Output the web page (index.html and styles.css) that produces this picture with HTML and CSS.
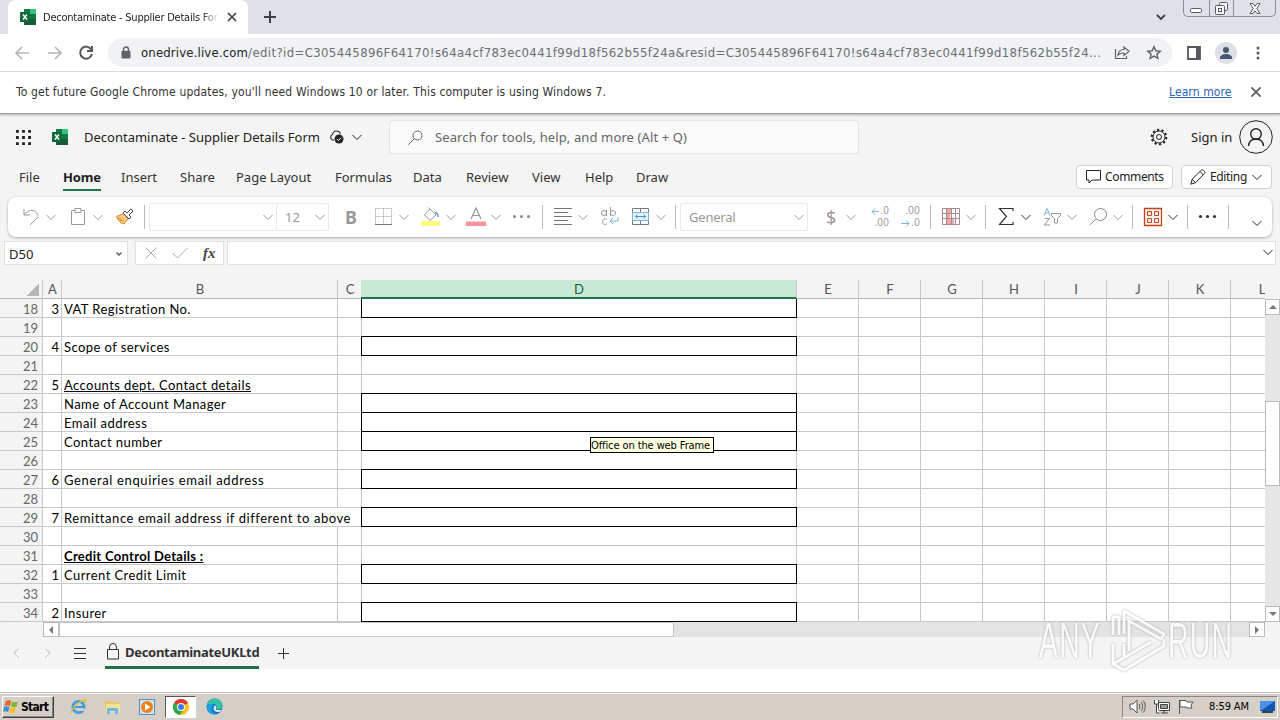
FILE: index.html
```html
<!DOCTYPE html>
<html lang="en">
<head>
  <meta charset="UTF-8">
  <title>Decontaminate - Supplier Details Form</title>
  <link rel="stylesheet" href="styles.css">
</head>
<body>
  <!-- Shared shapes -->
  <svg class="defs" width="0" height="0">
    <symbol id="chev" viewBox="0 0 10 10"><path d="M.5 3 5 7.5 9.5 3" fill="none" stroke="currentColor"/></symbol>
    <symbol id="excel" viewBox="0 0 16 16">
      <path d="M4 0h12v16H4z" fill="#21a366"/><path d="M4 0h6v5H4z" fill="#107c41"/><path d="M10 0h6v5h-6z" fill="#33c481"/>
      <path d="M4 10h12v6H4z" fill="#185c37"/><path d="M10 5h6v5h-6z" fill="#107c41"/>
      <path d="M0 3h10v10H0z" fill="#0e6b38"/><path d="m3 5.500 4 5M7 5.500l-4 5" stroke="#fff" stroke-width="1.500"/>
    </symbol>
  </svg>

  <!-- Browser -->
  <div class="tabstrip">
    <div class="tab">
      <svg width="16" height="16"><use href="#excel"/></svg>
      <span class="tab-title">Decontaminate - Supplier Details For</span>
      <svg width="10" height="10" viewBox="0 0 10 10"><path d="m1 1 8 8M9 1 1 9" stroke="#3c4043" stroke-width="1.700"/></svg>
    </div>
    <svg class="new-tab" width="12" height="12" viewBox="0 0 12 12"><path d="M6 0v12M0 6h12" stroke="#3c4043" stroke-width="2"/></svg>
    <svg class="tab-search" width="10" height="10" viewBox="0 0 10 10"><path d="m1 3 4 4 4-4" fill="none" stroke="#3c4043" stroke-width="1.800"/></svg>
    <div class="win-buttons">
      <span><svg width="12" height="5" viewBox="0 0 12 5"><rect x=".5" y=".5" width="11" height="4" rx="1" fill="#fff" stroke="#555b66"/></svg></span>
      <span><svg width="13" height="13" viewBox="0 0 13 13" fill="#f4f5f7" stroke="#555b66"><rect x="4.500" y=".5" width="8" height="8" rx="1"/><rect x=".5" y="3.500" width="9" height="9" rx="1"/><rect x="3.500" y="6.500" width="3" height="3"/></svg></span>
      <span><svg width="12" height="11" viewBox="0 0 12 11"><path d="M1 .5h3l2 2.800L8 .5h3L7.800 5.500 11 10.500H8L6 7.700l-2 2.800H1l3.200-5z" fill="#fff" stroke="#555b66"/></svg></span>
    </div>
  </div>

  <div class="toolbar">
    <svg width="16" height="14" viewBox="0 0 16 14" fill="none" stroke="#b4b6b9" stroke-width="1.700"><path d="M15 7H2M8 1 2 7l6 6"/></svg>
    <svg width="16" height="14" viewBox="0 0 16 14" fill="none" stroke="#b4b6b9" stroke-width="1.700"><path d="M1 7h13M8 1l6 6-6 6"/></svg>
    <svg width="16" height="16" viewBox="0 0 16 16" fill="none" stroke="#55585c" stroke-width="2"><path d="M13.300 4.500A6 6 0 1 0 14 9"/><path d="M14 1v5H9" /></svg>
    <div class="omnibox">
      <svg class="lock" width="10" height="13" viewBox="0 0 10 13"><path d="M2.500 5V3.500a2.500 2.500 0 0 1 5 0V5" fill="none" stroke="#5f6368" stroke-width="1.400"/><rect x=".5" y="4.800" width="9" height="7.700" rx="1" fill="#5f6368"/></svg>
      <span class="url"><b>onedrive.live.com</b>/edit?id=C305445896F64170!s64a4cf783ec0441f99d18f562b55f24a&amp;resid=C305445896F64170!s64a4cf783ec0441f99d18f562b55f24...</span>
      <svg width="16" height="15" viewBox="0 0 16 15" fill="none" stroke="#5f6368" stroke-width="1.200"><path d="M1.500 4v9.500h11V11"/><path d="M4 10c.5-4 3-5.500 6-5.500V2l5 4.300-5 4.200V8C7.500 8 5.500 8.500 4 10z"/></svg>
      <svg width="16" height="16" viewBox="0 0 16 16" fill="none" stroke="#5f6368" stroke-width="1.400"><path d="m8 1.800 1.800 4 4.400.4-3.300 2.900 1 4.300L8 11.100l-3.900 2.300 1-4.300-3.300-2.900 4.400-.4z"/></svg>
    </div>
    <svg class="side-panel" width="14" height="14" viewBox="0 0 14 14"><path d="M1 1h12v12H1z" fill="none" stroke="#55585c" stroke-width="1.800"/><path d="M9 1h4v12H9z" fill="#55585c"/></svg>
    <svg class="avatar" width="22" height="22" viewBox="0 0 22 22"><circle cx="11" cy="11" r="11" fill="#dde1e7"/><circle cx="11" cy="8" r="3" fill="#495670"/><path d="M5 17v-1.500c0-2 3.500-3.500 6-3.500s6 1.500 6 3.500V17z" fill="#495670"/></svg>
    <svg class="kebab" width="4" height="14" viewBox="0 0 4 14" fill="#55585c"><circle cx="2" cy="2" r="1.500"/><circle cx="2" cy="7" r="1.500"/><circle cx="2" cy="12" r="1.500"/></svg>
  </div>

  <div class="infobar">
    <span class="notice">To get future Google Chrome updates, you'll need Windows 10 or later. This computer is using Windows 7.</span>
    <a class="learn">Learn more</a>
    <svg width="10" height="10" viewBox="0 0 10 10"><path d="m.5.500 9 9M9.500.500l-9 9" stroke="#55585c" stroke-width="1.700"/></svg>
  </div>

  <!-- Excel -->
  <div class="excel">
    <div class="header">
      <svg class="waffle" width="15" height="15" viewBox="0 0 16 16" fill="#222"><path d="M0 0h3v3H0zM6.500 0h3v3h-3zM13 0h3v3h-3zM0 6.500h3v3H0zM6.500 6.500h3v3h-3zM13 6.500h3v3h-3zM0 13h3v3H0zM6.500 13h3v3h-3zM13 13h3v3h-3z"/></svg>
      <svg class="logo" width="16" height="16"><use href="#excel"/></svg>
      <span class="doc-title">Decontaminate - Supplier Details Form</span>
      <svg class="cloud" width="15" height="14" viewBox="0 0 15 14"><path d="M5 10H3.500a3 3 0 0 1 0-5.500C4 2.500 5.500 1 7.500 1S11 2.500 11.300 4" fill="none" stroke="#333" stroke-width="1.200"/><circle cx="10" cy="9" r="4.500" fill="#222"/><path d="m7.800 9 1.600 1.600 2.800-3" fill="none" stroke="#fff"/></svg>
      <svg class="title-chev" width="10" height="10"><use href="#chev"/></svg>
      <div class="search">
        <svg width="15" height="15" viewBox="0 0 15 15" fill="none" stroke="#666"><circle cx="9.500" cy="5.500" r="4.500"/><path d="m6.300 8.700-6 6"/></svg>
        <span>Search for tools, help, and more (Alt + Q)</span>
      </div>
      <svg class="gear" width="18" height="18" viewBox="0 0 18 18" fill="none" stroke="#222"><circle cx="9" cy="9" r="2.500"/><circle cx="9" cy="9" r="6"/><circle cx="9" cy="9" r="7.300" stroke-width="2" stroke-dasharray="2.300 2.287"/></svg>
      <span class="signin">Sign in</span>
      <svg class="person" width="34" height="34" viewBox="0 0 34 34" fill="none" stroke="#222"><circle cx="17" cy="17" r="16.300"/><g stroke-width="1.400"><circle cx="17" cy="14" r="5.300"/><path d="M9.500 26c.5-4.500 3.500-7 7.500-7s7 2.500 7.500 7"/></g></svg>
    </div>

    <div class="menu">
      <span>File</span><span class="active">Home</span><span>Insert</span><span>Share</span><span>Page Layout</span><span>Formulas</span><span>Data</span><span>Review</span><span>View</span><span>Help</span><span>Draw</span>
      <div class="menu-right">
        <div class="btn comments"><svg width="15" height="14" viewBox="0 0 15 14" fill="none" stroke="#222"><path d="M.5.500h14v9.500H6l-3 3V10H.5z"/></svg><span>Comments</span></div>
        <div class="btn editing"><svg width="16" height="16" viewBox="0 0 16 16" fill="none" stroke="#222"><path d="m.8 15.200 1.400-5L11.500 1c1-1 4.400 2 3.300 3.300L5.500 13.700zM10 2.500 13.400 6M2.200 10.500l3.200 3"/></svg><span>Editing</span><svg width="10" height="10"><use href="#chev"/></svg></div>
      </div>
    </div>

    <div class="ribbon">
      <div class="tool off"><svg viewBox="0 0 20 20"><path d="M3 2v6h6M3 8c4-5 9-6 12-3s2 6-1 8l-5 5"/></svg><svg class="c"><use href="#chev"/></svg></div>
      <div class="tool off"><svg viewBox="0 0 20 20"><path d="M7 3.500H3.500v14h13v-14H13M7 1.500h6v4H7z"/></svg><svg class="c"><use href="#chev"/></svg></div>
      <div class="tool"><svg viewBox="0 0 20 20"><path d="m1.500 9.500 7-3 4.500 5.500-4 5C5 16 2.500 13 1.500 9.500z" fill="#fbc98a" stroke="#e08a22"/><path d="m3 11 3 1M5 13.500l4-.5" stroke="#e08a22"/><path d="m8 6 2-2 2 2 4-4 2 2-4 4 2 2-2 2z" fill="#fff" stroke="#444"/></svg></div>
      <i class="sep"></i>
      <div class="field font"><svg class="c"><use href="#chev"/></svg></div>
      <div class="field size"><span>12</span><svg class="c"><use href="#chev"/></svg></div>
      <div class="bold">B</div>
      <div class="tool off"><svg viewBox="0 0 20 20"><path d="M1.500 1.500v15M9.500 1.500v15M17.500 1.500v15M1.500 1.500h16M1.500 9.500h16" stroke-dasharray="1 1"/><path d="M1 17.500h17" stroke="#777"/></svg><svg class="c"><use href="#chev"/></svg></div>
      <div class="tool off"><svg viewBox="0 0 20 20"><path d="M0 14h19v5H0z" fill="#fbfb82" stroke="none"/><path d="m9 2 6 6-6 5.500L3.500 8zM9 2 7.500.5"/><path d="M14 6c2-1 3 1 3 4" stroke="#6b9cc8" stroke-width="1.500"/></svg><svg class="c"><use href="#chev"/></svg></div>
      <div class="tool off"><svg viewBox="0 0 20 20"><path d="M0 14.500h20v4.500H0z" fill="#f9929b" stroke="none"/><path d="m5 12 5-11 5 11M6.700 8.500h6.600" stroke-width="1.200"/></svg><svg class="c"><use href="#chev"/></svg></div>
      <div class="tool"><svg viewBox="0 0 20 20"><g fill="#888" stroke="none"><circle cx="3.500" cy="9.500" r="1.500"/><circle cx="10.500" cy="9.500" r="1.500"/><circle cx="17.500" cy="9.500" r="1.500"/></g></svg></div>
      <i class="sep"></i>
      <div class="tool off"><svg viewBox="0 0 20 20" stroke="#777"><path d="M1 1.500h18M1 5.500h14M1 9.500h18M1 13.500h14M1 17.500h18"/></svg><svg class="c"><use href="#chev"/></svg></div>
      <div class="tool off"><svg viewBox="0 0 20 20"><circle cx="4" cy="6" r="2.500"/><path d="M6.500 3v6M10.500 0v9M7 12.500c-2-1.500-4.500-.5-4.500 2.200s2.500 3.700 4.500 2"/><circle cx="13" cy="6" r="2.500"/><path d="M18 10v4h-8m3-3-3 3 3 3" stroke="#79b6e3"/></svg></div>
      <div class="tool off"><svg viewBox="0 0 20 20"><path d="M1.500 1.500h16v16h-16z" stroke="#777"/><path d="M1.500 5.500h16M1.500 13.500h16M9.500 1.500v4M9.500 13.500v4" stroke="#777"/><path d="M1.500 5.500h16v8h-16z" fill="#e7f2fb" stroke="#79b6e3"/><path d="M4.500 9.500h10m-8-2-2 2 2 2m6-4 2 2-2 2" stroke="#4d92c8"/></svg><svg class="c"><use href="#chev"/></svg></div>
      <i class="sep"></i>
      <div class="field format"><span>General</span><svg class="c"><use href="#chev"/></svg></div>
      <div class="tool off money"><span>$</span><svg class="c"><use href="#chev"/></svg></div>
      <div class="decimal">
        <div><svg width="8" height="7" viewBox="0 0 8 7"><path d="M8 3.500H1M4 .5l-3 3 3 3"/></svg><span>.0</span></div>
        <span>.00</span>
      </div>
      <div class="decimal">
        <span>.00</span>
        <div><svg width="9" height="7" viewBox="0 0 9 7"><path d="M0 3.500h8M5 .5l3 3-3 3"/></svg><span>.0</span></div>
      </div>
      <i class="sep"></i>
      <div class="tool off"><svg viewBox="0 0 20 20"><path d="M5 2h5v5H5zM5 12h8v5H5zM5 7h4v5H5z" fill="#f7a3ab" stroke="none"/><path d="M1.500 1.500h17v16h-17zM5.500 1.500v16M10.500 1.500v16M14.500 1.500v16M1.500 6.500h17M1.500 11.500h17" stroke="#a58c8e"/></svg><svg class="c"><use href="#chev"/></svg></div>
      <i class="sep"></i>
      <div class="tool"><svg viewBox="0 0 20 20"><path d="M17 4V1.500H3.500l7 8-7 8H17V15" stroke-width="1.200"/></svg><svg class="c"><use href="#chev"/></svg></div>
      <div class="tool off"><svg viewBox="0 0 20 20"><path d="m2 8.500 3-7 3 7M3 6h4" stroke="#79b6e3"/><path d="M2.500 11.500h5L2 18h6M9.500 6.500h9v2l-3 3V16h-3v-4.500l-3-3z"/></svg><svg class="c"><use href="#chev"/></svg></div>
      <div class="tool off"><svg viewBox="0 0 20 20" stroke="#888"><circle cx="12.500" cy="7.500" r="6"/><path d="m8.200 12-6.500 6"/></svg><svg class="c"><use href="#chev"/></svg></div>
      <i class="sep"></i>
      <div class="tool"><svg viewBox="0 0 20 20" stroke="#c4421a"><path d="M1.500 1.500h17v17h-17z" fill="#fdf3ee" stroke-width="1.300"/><path d="M4.500 4.500h4v4h-4zM11.500 4.500h4v4h-4zM4.500 11.500h4v4h-4zM11.500 11.500h4v4h-4z"/></svg><svg class="c"><use href="#chev"/></svg></div>
      <i class="sep"></i>
      <div class="tool"><svg viewBox="0 0 20 20"><g fill="#333" stroke="none"><circle cx="2.500" cy="9.500" r="1.600"/><circle cx="9.500" cy="9.500" r="1.600"/><circle cx="16.500" cy="9.500" r="1.600"/></g></svg></div>
      <i class="sep"></i>
      <svg class="c collapse"><use href="#chev"/></svg>
    </div>

    <div class="formula-bar">
      <div class="name-box"><span>D50</span><svg width="6" height="6" viewBox="0 0 6 6"><path d="m.5 1.500 2.500 2.500 2.500-2.500" fill="none" stroke="#555" stroke-width="1.300"/></svg></div>
      <div class="fx">
        <svg width="12" height="12" viewBox="0 0 12 12" fill="none" stroke="#aaa"><path d="m.5.500 11 11M11.500.500l-11 11"/></svg>
        <svg width="16" height="12" viewBox="0 0 16 12" fill="none" stroke="#aaa"><path d="m.5 6 5 5 10-10"/></svg>
        <span>fx</span>
      </div>
      <div class="formula"><svg width="10" height="10"><use href="#chev"/></svg></div>
    </div>

    <div class="sheet-wrap">
      <div class="sheet">
        <div class="row head"><span class="corner"></span><span>A</span><span>B</span><span>C</span><span class="sel">D</span><span>E</span><span>F</span><span>G</span><span>H</span><span>I</span><span>J</span><span>K</span><span>L</span></div>
        <div class="row"><b>18</b><span>3</span><span>VAT Registration No.</span><span></span><span class="box"></span><span class="rest"></span></div>
        <div class="row"><b>19</b><span></span><span></span><span></span><span></span><span class="rest"></span></div>
        <div class="row"><b>20</b><span>4</span><span>Scope of services</span><span></span><span class="box"></span><span class="rest"></span></div>
        <div class="row"><b>21</b><span></span><span></span><span></span><span></span><span class="rest"></span></div>
        <div class="row"><b>22</b><span>5</span><span><u>Accounts dept. Contact details</u></span><span></span><span></span><span class="rest"></span></div>
        <div class="row"><b>23</b><span></span><span>Name of Account Manager</span><span></span><span class="box"></span><span class="rest"></span></div>
        <div class="row"><b>24</b><span></span><span>Email address</span><span></span><span class="box"></span><span class="rest"></span></div>
        <div class="row"><b>25</b><span></span><span>Contact number</span><span></span><span class="box"></span><span class="rest"></span></div>
        <div class="row"><b>26</b><span></span><span></span><span></span><span></span><span class="rest"></span></div>
        <div class="row"><b>27</b><span>6</span><span class="wide">General enquiries email address</span><span></span><span class="box"></span><span class="rest"></span></div>
        <div class="row"><b>28</b><span></span><span></span><span></span><span></span><span class="rest"></span></div>
        <div class="row"><b>29</b><span>7</span><span class="spill">Remittance email address if different to above</span><span></span><span class="box"></span><span class="rest"></span></div>
        <div class="row"><b>30</b><span></span><span></span><span></span><span></span><span class="rest"></span></div>
        <div class="row"><b>31</b><span></span><span><u class="strong">Credit Control Details :</u></span><span></span><span></span><span class="rest"></span></div>
        <div class="row"><b>32</b><span>1</span><span>Current Credit Limit</span><span></span><span class="box"></span><span class="rest"></span></div>
        <div class="row"><b>33</b><span></span><span></span><span></span><span></span><span class="rest"></span></div>
        <div class="row"><b>34</b><span>2</span><span>Insurer</span><span></span><span class="box"></span><span class="rest"></span></div>
      </div>
      <div class="vscroll">
        <div class="arrow"><i class="up"></i></div>
        <div class="thumb"></div>
        <div class="arrow"><i class="down"></i></div>
      </div>
    </div>

    <div class="hscroll">
      <div class="arrow"><i class="left"></i></div>
      <div class="thumb"></div>
      <div class="arrow"><i class="right"></i></div>
    </div>

    <div class="sheet-tabs">
      <svg class="nav" width="6" height="10" viewBox="0 0 6 10"><path d="M5.500.500 1 5l4.500 4.500" fill="none" stroke="#bbb"/></svg>
      <svg class="nav next" width="6" height="10" viewBox="0 0 6 10"><path d="M.5.500 5 5 .5 9.500" fill="none" stroke="#bbb"/></svg>
      <svg class="list" width="12" height="11" viewBox="0 0 12 11"><path d="M0 .5h12M0 5.500h12M0 10.500h12" stroke="#333"/></svg>
      <div class="sheet-tab">
        <svg width="12" height="17" viewBox="0 0 12 17" fill="none" stroke="#333"><path d="M.5 6.500h11v9.500H.5zM2.500 6.500V4a3.500 3.500 0 0 1 7 0v2.500"/></svg>
        <span>DecontaminateUKLtd</span>
      </div>
      <svg class="add" width="11" height="11" viewBox="0 0 11 11"><path d="M5.500 0v11M0 5.500h11" stroke="#333"/></svg>
    </div>
  </div>

  <div class="tooltip">Office on the web Frame</div>

  <div class="watermark">
    <span>ANY</span>
    <svg width="60" height="66" viewBox="0 0 60 66" fill="none" stroke="#fff" stroke-width="3" stroke-linejoin="round"><path d="M5 27V9h6v18M16 26V3l40 23-3 5-32-18v30"/><path d="M5 36v20l11 6 40-24v-7M5 56l38-22M16 50V36"/></svg>
    <span>RUN</span>
  </div>

  <!-- Windows taskbar -->
  <div class="taskbar">
    <div class="start">
      <svg width="16" height="15" viewBox="0 0 16 15"><path d="M3 2c2-1 4-1 5 0L7 7C5 6 3.500 6 1.500 7z" fill="#e8632a"/><path d="M9 2.500c2 1 4 1 6 0l-1.500 5c-2 1-4 1-5.500 0z" fill="#7fb82e"/><path d="M1 8c2-1 4-1 5.500 0L5 13c-2-1-3.500-1-5 0z" fill="#3f8ed6"/><path d="M7.500 8.500c2 1 4 1 5.500 0l-1.500 5c-2 1-4 1-5.500 0z" fill="#f6bf26"/></svg>
      <span>Start</span>
    </div>
    <div class="task"><svg width="17" height="17" viewBox="0 0 17 17" fill="none"><circle cx="8.500" cy="9" r="5.700" stroke="#3a9de0" stroke-width="2.800"/><path d="M4 9h10" stroke="#3a9de0" stroke-width="2"/><path d="M11 10.500h5V13h-5z" fill="#d4d0c8"/><path d="M1 15C2 10 9 3 15.500 1.500c1 1 0 2.500-1 4" stroke="#e9bd3d" stroke-width="1.300"/></svg></div>
    <div class="task"><svg width="17" height="16" viewBox="0 0 17 16"><path d="M1 2h5l1 1h8v10H1z" fill="#e9c664"/><path d="M2 5h14v8H2z" fill="#f8e397"/><path d="M3 14V9h11v6h-3v-3H6v3H3z" fill="#6bb7e6"/></svg></div>
    <div class="task"><svg width="16" height="16" viewBox="0 0 16 16"><rect x=".5" y=".5" width="15" height="15" fill="#cde5f7" stroke="#5791c4"/><circle cx="8" cy="8" r="6" fill="#f08119"/><path d="m6 4.500 5.500 3.500L6 11.500z" fill="#fff"/></svg></div>
    <div class="task current"><svg width="16" height="16" viewBox="0 0 16 16"><circle cx="8" cy="8" r="8" fill="#fbc116"/><path d="M8 8 1 4a8 8 0 0 1 14 0z" fill="#e33b2e"/><path d="M8 8 1 4a8 8 0 0 0 6 12l4-6z" fill="#2da94f"/><circle cx="8" cy="8" r="4" fill="#fff"/><circle cx="8" cy="8" r="3" fill="#3d7de8"/></svg></div>
    <div class="task"><svg width="17" height="17" viewBox="0 0 17 17"><circle cx="8.500" cy="8.500" r="8" fill="#1474c4"/><path d="M1 7C2 2 6 .5 9 .5c5 0 8 4 7.500 7.500-.5 3-4 4-6.500 3 2-3-.5-5-3-5C4 6 2 7 1 7z" fill="#35c1a5"/><path d="M6 9c-1 3 1 7 5 7-6 2-11-3-10-8 1-2 5-3 7-1-1 0-2 1-2 2z" fill="#1b9de2"/><path d="M9 7.500c2 1 1 3 .5 3.500 1 1.500 4 1.500 6 .5l-1 2c-3 1-7 0-7-3 0-1 .5-2 1.500-3z" fill="#e6f4fa"/></svg></div>
    <div class="tray">
      <svg width="17" height="15" viewBox="0 0 17 15" fill="#fff" stroke="#555"><path d="M1 5h3l4-4v13l-4-4H1z"/><path d="M10 5c1 1 1 4 0 5M12 3c2 2 2 7 0 9M14 1.500c3 3 3 9 0 12" fill="none"/></svg>
      <svg width="16" height="15" viewBox="0 0 16 15" fill="#fff" stroke="#444"><path d="M4.500 3.500h11v8h-11zM7 14h7M10 12v2"/><path d="M6.500 5.500h7v4h-7z" fill="#999"/><path d="M.5 1v4h4V1M2.500 5v9h3"/></svg>
      <svg width="16" height="15" viewBox="0 0 16 15" fill="#fff" stroke="#555"><path d="M1.500 1v14M2 1.500h6l1 1.500h6l-2 3 1 3H9L8 8H2z"/></svg>
      <span>8:59 AM</span>
      <svg width="15" height="12" viewBox="0 0 15 12"><path d="M0 0h15v10H0z" fill="#1456b8"/><path d="M0 0h15L2 9H0z" fill="#4a92e6"/><path d="M2 10h11v2H2z" fill="#344"/></svg>
    </div>
  </div>
</body>
</html>
```
FILE: styles.css
```css
* {
  box-sizing: border-box;
}

body {
  margin: 0;
  width: 1280px;
  height: 720px;
  overflow: hidden;
  position: relative;
  background: #fff;
  color: #222;
  font-family: 'Noto Sans', 'Open Sans', sans-serif;
  font-size: 13px;
  white-space: nowrap;
}

svg {
  display: block;
  flex: none;
}

.defs {
  position: absolute;
}

/* ---------- browser ---------- */

.tabstrip {
  display: flex;
  align-items: center;
  height: 34px;
  padding-left: 8px;
  background: #dee1e8;
}

.tab {
  display: flex;
  align-items: center;
  width: 240px;
  height: 34px;
  padding: 0 11px 0 12px;
  background: #fff;
  border-radius: 8px 8px 0 0;
}

.tab-title {
  width: 176px;
  margin: 0 8px 0 7px;
  font-family: 'DejaVu Sans Condensed', 'DejaVu Sans', sans-serif;
  font-size: 11px;
  letter-spacing: -.23px;
  -webkit-mask-image: linear-gradient(90deg, #000 90%, transparent);
  mask-image: linear-gradient(90deg, #000 90%, transparent);
}

.new-tab {
  margin-left: 16px;
}

.tab-search {
  margin-left: auto;
}

.win-buttons {
  display: flex;
  align-self: flex-start;
  width: 93px;
  height: 17px;
  margin: 0 4px 0 17px;
  border: 1px solid #8b8f98;
  border-top: 0;
  border-radius: 0 0 5px 5px;
}

.win-buttons span {
  display: flex;
  align-items: center;
  justify-content: center;
  width: 25px;
}

.win-buttons span:first-child {
  padding-top: 4px;
}

.win-buttons span + span {
  border-left: 1px solid #8b8f98;
}

.win-buttons span:last-child {
  width: 42px;
}

.toolbar {
  display: flex;
  align-items: center;
  height: 38px;
  padding-left: 14px;
  border-bottom: 1px solid #d6d8db;
}

.toolbar > svg:nth-child(2) {
  margin-left: 17px;
}

.toolbar > svg:nth-child(3) {
  margin-left: 15px;
}

.omnibox {
  display: flex;
  align-items: center;
  width: 1064px;
  height: 29px;
  margin-left: 14px;
  padding-left: 13px;
  border-radius: 15px;
  background: #f0f2f5;
}

.url {
  width: 973px;
  margin-left: 10px;
  color: #6b6f74;
  font-family: 'DejaVu Sans Condensed', 'DejaVu Sans', sans-serif;
  font-size: 13px;
  letter-spacing: .383px;
}

.url b {
  color: #222;
  font-weight: normal;
  letter-spacing: .16px;
}

.omnibox .url + svg {
  margin-right: 16px;
}

.side-panel {
  margin-left: 15px;
}

.avatar {
  margin-left: 14px;
}

.kebab {
  margin-left: 19px;
}

.infobar {
  display: flex;
  align-items: center;
  height: 41px;
  padding: 0 19px 1px 16px;
  color: #333;
  font-family: 'DejaVu Sans Condensed', 'DejaVu Sans', sans-serif;
  font-size: 12px;
}

.notice {
  width: 1153px;
  letter-spacing: .16px;
}

.learn {
  width: 62px;
  color: #2a66b5;
  text-decoration: underline;
  letter-spacing: .1px;
}

.infobar svg {
  margin-left: auto;
}

/* ---------- excel ---------- */

.excel {
  height: 556px;
  background: #f4f4f4;
  border-top: 1px solid #999;
  box-shadow: inset 0 3px 2px -1px #ccc;
}

.header {
  display: flex;
  align-items: center;
  height: 46px;
  padding-left: 16px;
}

.logo {
  margin-left: 21px;
}

.doc-title {
  width: 238px;
  margin-left: 16px;
}

.cloud {
  margin-left: 7px;
}

.title-chev {
  margin-left: 8px;
}

.search {
  display: flex;
  align-items: center;
  width: 468px;
  height: 32px;
  margin-left: 28px;
  padding-left: 18px;
  background: #fafafa;
  border-radius: 3px;
  box-shadow: 0 0 2px #bbb;
  color: #666;
}

.search span {
  margin-left: 12px;
  letter-spacing: .12px;
}

.gear {
  margin-left: 292px;
}

.signin {
  width: 48px;
  margin-left: 23px;
}

.menu {
  display: grid;
  grid-template-columns: 44px 58px 59px 56px 99px 78px 53px 66px 53px 51px 40px 1fr;
  align-items: center;
  height: 33px;
  padding-left: 19px;
  color: #333;
}

.menu .active {
  justify-self: start;
  padding: 6px 0 3px;
  border-bottom: 2px solid #217346;
  color: #222;
  font-weight: bold;
  letter-spacing: -.2px;
  line-height: 18px;
}

.menu-right {
  display: flex;
  justify-content: flex-end;
  gap: 8px;
  padding-right: 8px;
}

.btn {
  display: flex;
  align-items: center;
  height: 24px;
  background: #fff;
  border: 1px solid #d0d0d0;
  border-radius: 4px;
  color: #222;
  font-size: 12px;
  letter-spacing: -.35px;
}

.comments {
  width: 97px;
  padding-left: 9px;
}

.comments span {
  margin-left: 4px;
}

.editing {
  width: 91px;
  padding-left: 8px;
}

.editing span {
  width: 38px;
  margin: 0 4px 0 4px;
}

.ribbon {
  display: grid;
  grid-template-columns: 47px 47px 29px 5px 127px 66px 32px 47px 45px 45px 31px 11px 47px 31px 44px 5px 141px 48px 31px 30px 11px 44px 11px 46px 46px 44px 11px 44px 11px 30px 24px 10px;
  align-items: center;
  height: 40px;
  margin: 4px 8px 0;
  padding-left: 13px;
  background: #fff;
  border-radius: 8px;
  box-shadow: 0 1px 3px #aaa;
}

.tool {
  display: flex;
  align-items: center;
  gap: 5px;
}

.tool svg {
  width: 20px;
  height: 20px;
  color: #333;
}

.tool svg:not([stroke]) {
  fill: none;
  stroke: #333;
}

.tool svg[stroke] {
  fill: none;
}

.tool.off svg {
  color: #999;
}

.tool.off svg:not([stroke]) {
  stroke: #999;
}

.ribbon .c {
  width: 10px;
  height: 10px;
}

.tool .c {
  stroke: none !important;
}

.sep {
  width: 1px;
  height: 24px;
  background: #bbb;
}

.field {
  display: flex;
  align-items: center;
  height: 28px;
  padding: 0 3px 0 8px;
  border: 1px solid #e9e9e9;
  border-radius: 2px;
  color: #999;
}

.field .c {
  margin-left: auto;
}

.font {
  width: 128px;
}

.size {
  width: 53px;
}

.format {
  width: 128px;
  letter-spacing: -.2px;
}

.bold {
  padding-left: 3px;
  color: #999;
  font-size: 18px;
  font-weight: bold;
}

.money span {
  width: 20px;
  padding-left: 5px;
  color: #999;
  font-size: 18px;
}

.decimal {
  display: flex;
  flex-direction: column;
  align-items: flex-end;
  width: 20px;
  color: #999;
  font-family: 'Liberation Sans', sans-serif;
  font-size: 10px;
  letter-spacing: .3px;
  line-height: 12px;
}

.decimal div {
  display: flex;
  align-items: center;
  gap: 1px;
}

.decimal svg {
  fill: none;
  stroke: #79b6e3;
}

.collapse {
  margin-top: 12px;
}

.formula-bar {
  display: flex;
  height: 24px;
  margin: 4px 4px 0;
}

.name-box,
.fx,
.formula {
  display: flex;
  align-items: center;
  background: #fff;
  border: 1px solid #e1e1e1;
}

.name-box {
  justify-content: space-between;
  width: 124px;
  padding: 1px 5px 0 4px;
}

.fx {
  width: 89px;
  margin-left: 7px;
  padding-left: 9px;
  gap: 15px;
}

.fx span {
  font-family: 'Liberation Serif', serif;
  font-size: 15px;
  font-style: italic;
  font-weight: bold;
  color: #444;
}

.formula {
  flex: 1;
  justify-content: flex-end;
  margin-left: 3px;
  padding: 0 2px 2px 0;
}

.sheet-wrap {
  display: flex;
  height: 342px;
  margin-top: 15px;
}

.sheet {
  width: 1265px;
  overflow: hidden;
  font-family: Lato, 'Open Sans', sans-serif;
  font-size: 13px;
  color: #000;
}

.row {
  display: grid;
  grid-template-columns: 43px 19px 276px 24px 435px 468px;
  grid-template-rows: 19px;
  height: 19px;
  line-height: 20px;
  background: #fff;
}

.row > * {
  border-right: 1px solid #c8c8c8;
  border-bottom: 1px solid #c8c8c8;
}

.row > b {
  padding-right: 4px;
  background: #f4f4f4;
  color: #666;
  font-weight: normal;
  text-align: right;
}

.row > span:nth-child(2) {
  padding-right: 2px;
  text-align: right;
}

.row > span:nth-child(3) {
  padding-left: 2px;
  letter-spacing: .43px;
}

.row > .wide:nth-child(3) {
  letter-spacing: .64px;
}

.row > .spill {
  border-right-color: #fff;
}

.row > .spill:nth-child(3) {
  letter-spacing: .56px;
}

.row > .box {
  margin: -1px 0 0 -1px;
  border: 1px solid #000;
}

.row > .rest {
  border-right: 0;
  background: repeating-linear-gradient(90deg, transparent 0 61px, #c8c8c8 61px 62px);
}

.strong {
  font-weight: bold;
  letter-spacing: .3px;
}

.head {
  position: relative;
  z-index: 1;
  grid-template-columns: 43px 19px 276px 24px 435px repeat(8, 62px);
  background: #f4f4f4;
  color: #555;
  line-height: 19px;
}

.head > span:nth-child(n) {
  padding: 0 0 0 1px;
  text-align: center;
  letter-spacing: 0;
  border-bottom-color: #b5b5b5;
}

.head > .corner {
  background: linear-gradient(135deg, transparent 50%, #b5b5b5 50%) 27px 4px / 12px 12px no-repeat;
}

.head > .sel.sel {
  margin-left: -1px;
  background: #c9e9d7;
  border-bottom: 2px solid #217346;
  color: #185c37;
}

.arrow {
  display: flex;
  align-items: center;
  justify-content: center;
  width: 15px;
  height: 16px;
  background: #fff;
  border: 1px solid #bbb;
}

.arrow i {
  border: 4px solid transparent;
}

.arrow .up {
  border-top: 0;
  border-bottom-color: #777;
}

.arrow .down {
  border-bottom: 0;
  border-top-color: #777;
}

.arrow .left {
  border-left: 0;
  border-right-color: #777;
}

.arrow .right {
  border-right: 0;
  border-left-color: #777;
}

.vscroll {
  display: flex;
  flex-direction: column;
  justify-content: space-between;
  width: 15px;
  height: 323px;
  margin-top: 19px;
  background: #e6e6e6;
}

.vscroll .thumb {
  height: 85px;
  margin-bottom: 35px;
  background: #fff;
  border: 1px solid #bbb;
}

.hscroll {
  display: flex;
  width: 1222px;
  height: 15px;
  margin-left: 43px;
  background: #e3e3e3;
}

.hscroll .arrow {
  width: 16px;
  height: 15px;
}

.hscroll .thumb {
  width: 615px;
  margin-right: auto;
  background: #fff;
  border: 1px solid #c4c4c4;
}

.sheet-tabs {
  display: flex;
  align-items: center;
  height: 32px;
  padding-left: 13px;
}

.next {
  margin-left: 26px;
}

.list {
  margin-left: 23px;
}

.sheet-tab {
  display: flex;
  align-items: center;
  width: 154px;
  height: 32px;
  margin-left: 19px;
  padding-left: 2px;
  border-bottom: 3px solid #217346;
  color: #333;
  font-weight: bold;
}

.sheet-tab span {
  margin-left: 6px;
  padding-top: 1px;
  letter-spacing: -.3px;
}

.add {
  margin-left: 19px;
}

.tooltip {
  position: absolute;
  left: 590px;
  top: 437px;
  width: 124px;
  height: 16px;
  background: #ffffe1;
  border: 1px solid #000;
  color: #000;
  font-family: 'DejaVu Sans Condensed', 'DejaVu Sans', sans-serif;
  font-size: 11px;
  letter-spacing: -.1px;
  line-height: 15px;
}

.watermark {
  position: absolute;
  left: 1039px;
  top: 608px;
  display: flex;
  align-items: center;
  width: 194px;
  height: 66px;
  opacity: .8;
  filter: drop-shadow(0 0 1px #999);
}

.watermark span {
  width: 69px;
  color: #fff;
  font-family: 'Liberation Sans', sans-serif;
  font-size: 50px;
  letter-spacing: 2px;
  transform: scaleX(.57);
  transform-origin: left;
}

/* ---------- taskbar ---------- */

.taskbar {
  position: absolute;
  left: 0;
  top: 692px;
  display: flex;
  align-items: center;
  width: 1280px;
  height: 28px;
  background: #d5cfc8;
  border-top: 1px solid #c2beb8;
  box-shadow: inset 0 1px #fff;
}

.start {
  display: flex;
  align-items: center;
  width: 52px;
  height: 22px;
  margin: 0 7px 0 2px;
  border: 1px solid;
  border-color: #fff #404040 #404040 #fff;
  box-shadow: inset -1px -1px #888;
  color: #000;
  font-family: 'DejaVu Sans Condensed', 'DejaVu Sans', sans-serif;
  font-size: 12px;
  font-weight: bold;
}

.start span {
  margin-left: 2px;
  letter-spacing: -.7px;
}

.task {
  display: flex;
  align-items: center;
  justify-content: center;
  width: 31px;
  height: 22px;
  margin: 0 1px 0 2px;
}

.current {
  background: #fff;
  border: 1px solid;
  border-color: #555 #fff #fff #555;
}

.tray {
  display: flex;
  align-items: center;
  width: 156px;
  height: 22px;
  margin: 0 2px 0 auto;
  padding-left: 6px;
  border: 1px solid;
  border-color: #888 #fff #fff #888;
  color: #000;
  font-family: 'DejaVu Sans Condensed', 'DejaVu Sans', sans-serif;
  font-size: 11px;
}

.tray svg + svg {
  margin-left: 8px;
}

.tray span {
  width: 42px;
  margin: 0 9px 0 15px;
  letter-spacing: -.1px;
}
```
